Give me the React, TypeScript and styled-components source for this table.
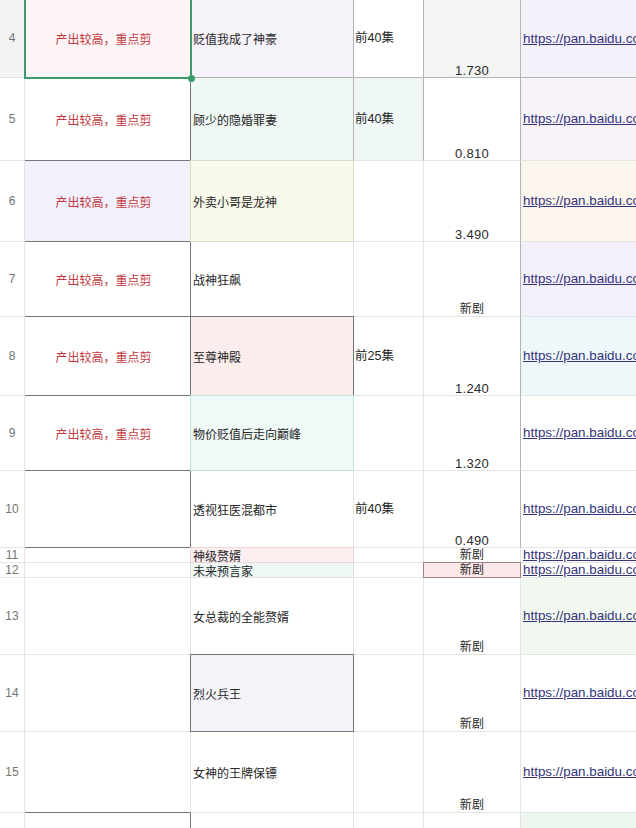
import React from "react";
import styled, { createGlobalStyle, css } from "styled-components";

const GlobalStyle = createGlobalStyle`
  html, body { margin: 0; padding: 0; background: #ffffff; }
  body {
    font-family: "Liberation Sans", "Noto Sans CJK SC", sans-serif;
    overflow: hidden;
  }
`;

const L = "#e4e4e4";
const M = "#b4b4b4";
const D = "#767676";

type CellSpec = { bg?: string; rb?: string; bb?: string; box?: string };

type RowSpec = {
  n: number;
  h: number;
  status?: string;
  title?: string;
  episodes?: string;
  score?: string;
  link?: boolean;
  selected?: boolean;
  cells: [CellSpec, CellSpec, CellSpec, CellSpec, CellSpec, CellSpec];
};

const RED = "产出较高，重点剪";
const URL = "https://pan.baidu.com/s/1";

const rows: RowSpec[] = [
  {
    n: 4, h: 78, status: RED, title: "贬值我成了神豪", episodes: "前40集", score: "1.730", link: true, selected: true,
    cells: [
      { bg: "#f3f3f3", rb: L, bb: L },
      { bg: "#fdf4f6", rb: D, bb: D },
      { bg: "#f7f3fb", rb: M, bb: M },
      { bg: "#ffffff", rb: M, bb: M },
      { bg: "#f3f5f2", rb: M, bb: M },
      { bg: "#f4f1fb", bb: M },
    ],
  },
  {
    n: 5, h: 83, status: RED, title: "顾少的隐婚罪妻", episodes: "前40集", score: "0.810", link: true,
    cells: [
      {}, { rb: D, bb: D }, { bg: "#eff8f5", rb: M }, { bg: "#eff8f6", rb: M }, { rb: M }, { bg: "#f7f3f9" },
    ],
  },
  {
    n: 6, h: 81, status: RED, title: "外卖小哥是龙神", score: "3.490", link: true,
    cells: [
      {}, { bg: "#f2f0fa", rb: D, bb: D }, { bg: "#fafaec", box: "#dcdcc0" }, {}, { rb: M }, { bg: "#fbf5ee" },
    ],
  },
  {
    n: 7, h: 75, status: RED, title: "战神狂飙", score: "新剧", link: true,
    cells: [{}, { rb: D, bb: D }, {}, {}, { rb: M }, { bg: "#f4f0fb" }],
  },
  {
    n: 8, h: 79, status: RED, title: "至尊神殿", episodes: "前25集", score: "1.240", link: true,
    cells: [{}, { rb: D, bb: D }, { bg: "#fcecec", box: D }, {}, { rb: M }, { bg: "#eef8fb" }],
  },
  {
    n: 9, h: 75, status: RED, title: "物价贬值后走向巅峰", score: "1.320", link: true,
    cells: [{}, { rb: D, bb: D }, { bg: "#eff9f6", box: "#c4e2d8" }, {}, { rb: M }, {}],
  },
  {
    n: 10, h: 77, title: "透视狂医混都市", episodes: "前40集", score: "0.490", link: true,
    cells: [{}, { rb: D, bb: D }, {}, {}, { rb: M }, {}],
  },
  {
    n: 11, h: 15, title: "神级赘婿", score: "新剧", link: true,
    cells: [{}, {}, { bg: "#fdeff0", box: "#f0d4d6" }, {}, {}, {}],
  },
  {
    n: 12, h: 15, title: "未来预言家", score: "新剧", link: true,
    cells: [{}, {}, { bg: "#edf8f5" }, {}, { bg: "#fce8e8", box: "#a08484" }, {}],
  },
  {
    n: 13, h: 77, title: "女总裁的全能赘婿", score: "新剧", link: true,
    cells: [{}, {}, {}, {}, {}, { bg: "#f0f8ef", box: "#9aa79a" }],
  },
  {
    n: 14, h: 77, title: "烈火兵王", score: "新剧", link: true,
    cells: [{}, {}, { bg: "#f4f3fa", box: D }, {}, {}, {}],
  },
  {
    n: 15, h: 81, title: "女神的王牌保镖", score: "新剧", link: true,
    cells: [{}, { bb: D }, {}, {}, {}, {}],
  },
  {
    n: 16, h: 60,
    cells: [{}, { rb: D }, {}, {}, {}, { bg: "#eef7ee", box: "#9aa79a" }],
  },
];

const Sheet = styled.div`
  width: 636px;
  height: 828px;
  overflow: hidden;
  display: flex;
  flex-direction: column;
`;

const Row = styled.div<{ $h: number }>`
  display: grid;
  grid-template-columns: 25px 166px 163px 70px 97px 1fr;
  height: ${(p) => p.$h}px;
  flex: none;
`;

const CellBase = styled.div<{ $bg?: string; $rb?: string; $bb?: string; $box?: string }>`
  position: relative;
  box-sizing: border-box;
  min-width: 0;
  background: ${(p) => p.$bg || "#ffffff"};
  border-right: 1px solid ${(p) => p.$rb || L};
  border-bottom: 1px solid ${(p) => p.$bb || L};
  display: flex;
  align-items: center;
  white-space: nowrap;
  font-size: 12px;
  line-height: 13px;
  ${(p) =>
    p.$box &&
    css`
      &::after {
        content: "";
        position: absolute;
        top: -1px;
        left: -1px;
        right: -1px;
        bottom: -1px;
        border: 1px solid ${p.$box};
        pointer-events: none;
        z-index: 1;
      }
    `}
`;

const RowHeader = styled(CellBase)`
  justify-content: center;
  color: #747474;
  font-size: 12px;
`;

const StatusCell = styled(CellBase)`
  justify-content: center;
  padding-right: 8px;
  color: #c43a40;
  font-family: "Noto Sans CJK SC", sans-serif;
  font-size: 12px;
`;

const TitleCell = styled(CellBase)`
  padding-left: 2px;
  color: #262626;
  font-family: "Noto Sans CJK SC", sans-serif;
  font-size: 12px;
`;

const EpisodeCell = styled(CellBase)`
  padding-left: 1px;
  color: #262626;
  font-family: "Liberation Sans", "Noto Sans CJK SC", sans-serif;
  font-size: 12.5px;
`;

const ScoreCell = styled(CellBase)`
  justify-content: center;
  align-items: flex-end;
  color: #2a2a2a;
  font-family: "Liberation Sans", "Noto Sans CJK SC", sans-serif;
  font-size: 13px;
  line-height: 12px;
  letter-spacing: 0.3px;
  z-index: 2;
`;

const ScoreText = styled.span<{ $cjk: boolean }>`
  font-size: ${(p) => (p.$cjk ? "12px" : "13px")};
  margin-bottom: ${(p) => (p.$cjk ? "1px" : "0")};
`;

const LinkCell = styled(CellBase)`
  padding-left: 2px;
  overflow: hidden;
  border-right: none;
  line-height: 14px;
`;

const LinkText = styled.a`
  color: #34347a;
  text-decoration: underline;
  text-underline-offset: 1px;
  font-family: "Liberation Sans", sans-serif;
  font-size: 13.4px;
  position: relative;
  z-index: 2;
`;

const Selection = styled.div`
  position: absolute;
  top: -4px;
  left: -1px;
  right: -2px;
  bottom: -2px;
  border: 2px solid #3a9c6c;
  pointer-events: none;
  z-index: 3;
`;

const Handle = styled.div`
  position: absolute;
  right: -5px;
  bottom: -5px;
  width: 7px;
  height: 7px;
  border-radius: 50%;
  background: #3a9c6c;
  z-index: 4;
`;

export default function App() {
  return (
    <>
      <GlobalStyle />
      <Sheet>
        {rows.map((r) => {
          const [h, a, b, c, d, e] = r.cells;
          return (
            <Row key={r.n} $h={r.h}>
              <RowHeader $bg={h.bg} $rb={h.rb} $bb={h.bb}>{r.n}</RowHeader>
              <StatusCell $bg={a.bg} $rb={a.rb} $bb={a.bb} $box={a.box}>
                {r.status}
                {r.selected && (
                  <Selection>
                    <Handle />
                  </Selection>
                )}
              </StatusCell>
              <TitleCell $bg={b.bg} $rb={b.rb} $bb={b.bb} $box={b.box}>{r.title}</TitleCell>
              <EpisodeCell $bg={c.bg} $rb={c.rb} $bb={c.bb} $box={c.box}>{r.episodes}</EpisodeCell>
              <ScoreCell $bg={d.bg} $rb={d.rb} $bb={d.bb} $box={d.box}>
                {r.score && <ScoreText $cjk={r.score === "新剧"}>{r.score}</ScoreText>}
              </ScoreCell>
              <LinkCell $bg={e.bg} $rb={e.rb} $bb={e.bb} $box={e.box}>
                {r.link && <LinkText href="#">{URL}</LinkText>}
              </LinkCell>
            </Row>
          );
        })}
      </Sheet>
    </>
  );
}
